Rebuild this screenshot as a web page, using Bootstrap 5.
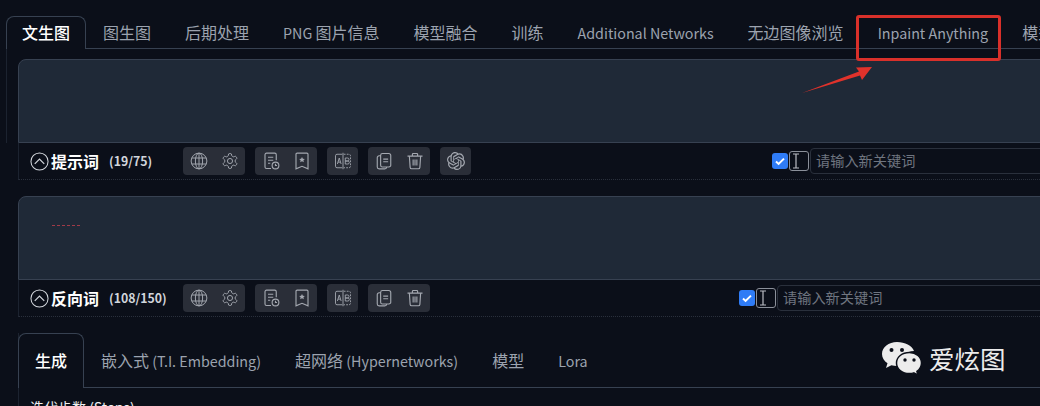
<!DOCTYPE html>
<html lang="zh-CN">

<head>
    <meta charset="UTF-8">
    <meta name="viewport" content="width=device-width, initial-scale=1.0">
    <title>文生图</title>
    <link href="https://cdn.jsdelivr.net/npm/bootstrap@5.3.0/dist/css/bootstrap.min.css" rel="stylesheet">
    <style>
        html, body {
            height: 406px;
            overflow: hidden;
        }

        body {
            background-color: #0b0f19;
            color: #e5e7eb;
            font-family: "Noto Sans CJK SC", "Noto Sans", sans-serif;
            font-size: 16px;
        }

        .page-wrap {
            padding: 16px 0 0 6px;
            width: 1200px;
        }

        .icon-defs {
            position: absolute;
            width: 0;
            height: 0;
        }

        .lat {
            font-size: 14.3px;
        }

        .sd-tabs {
            border-bottom: 1px solid #374151;
            flex-wrap: nowrap;
            white-space: nowrap;
            height: 33px;
        }

        .sd-tabs .nav-link {
            color: #9ca3af;
            background: transparent;
            border: 1px solid transparent;
            border-bottom: 0;
            border-radius: 8px 8px 0 0;
            font-size: 16px;
            line-height: 30px;
            height: 33px;
            padding: 0 16px;
            margin: 0;
        }

        .sd-tabs .nav-link.active {
            color: #fff;
            font-weight: 500;
            background: #0b0f19;
            border-color: #374151;
            padding: 0 15px;
        }

        .sd-tabs.sub-tabs {
            height: 55px;
            margin-left: -1px;
        }

        .sub-tabs .nav-link {
            line-height: 52px;
            height: 55px;
        }

        .sub-tabs .nav-link.active {
            padding: 0 16px;
        }

        .tab-body {
            border-left: 1px solid #1c2330;
            padding: 10px 0 0 11px;
        }

        .prompt-box {
            display: block;
            width: 100%;
            height: 84px;
            background-color: #1f2937;
            border: 1px solid #374151;
            border-radius: 8px 8px 0 0;
            resize: none;
            box-shadow: none;
        }

        .prompt-holder {
            position: relative;
            padding-left: 12px;
        }

        .prompt-marks {
            position: absolute;
            left: 46px;
            top: 29px;
            width: 28px;
            border-top: 1px dashed #a03a48;
        }

        .tool-row {
            height: 37px;
            margin-left: 12px;
            border-left: 1px solid #1c2330;
            border-bottom: 1px dotted #2a303c;
            margin-bottom: 16px;
            padding-left: 11px;
        }

        .fold-icon {
            width: 19px;
            height: 19px;
            margin-right: 2px;
            color: #d1d5db;
        }

        .prompt-label {
            color: #fff;
            font-weight: 700;
            font-size: 16px;
            width: 58px;
        }

        .token-count {
            color: #d1d5db;
            font-weight: 700;
            font-size: 12.3px;
            width: 74px;
        }

        .tool-group {
            display: flex;
            height: 28px;
            background-color: #2a2e38;
            border-radius: 4px;
            margin-right: 10px;
        }

        .tool-btn {
            display: flex;
            align-items: center;
            justify-content: center;
            width: 31px;
            height: 28px;
            padding: 0;
            border: 0;
            background: transparent;
            color: #a4a8b0;
        }

        .tool-btn svg {
            width: 18px;
            height: 18px;
        }

        .kw-first {
            margin-left: 291px;
        }

        .kw-second {
            margin-left: 299px;
        }

        .kw-check {
            appearance: none;
            flex: none;
            width: 16px;
            height: 16px;
            margin: 0 1px 0 0;
            border-radius: 3px;
            background-color: #2f7cf6;
            background-image: url("data:image/svg+xml,%3Csvg xmlns='http://www.w3.org/2000/svg' viewBox='0 0 16 16'%3E%3Cpath d='M4 8.5l2.6 2.4L12 5.6' fill='none' stroke='%23fff' stroke-width='2'/%3E%3C/svg%3E");
        }

        .cursor-box {
            display: flex;
            align-items: center;
            justify-content: center;
            flex: none;
            width: 20px;
            height: 20px;
            border: 1px solid #8b909a;
            border-radius: 3px;
            color: #b9bcc3;
            margin-right: 1px;
            padding-right: 7px;
        }

        .keyword-input {
            width: 300px;
            height: 26px;
            background: transparent;
            border: 1px solid #2a303c;
            border-radius: 4px;
            color: #e5e7eb;
            font-size: 14.2px;
            padding: 0 5px 2px;
        }

        .keyword-input::placeholder {
            color: #6f7580;
            opacity: 1;
        }

        .sub-wrap {
            margin: 16px 0 0 12px;
            border-left: 1px solid #1c2330;
        }

        .steps-label {
            padding: 9px 0 0 11px;
            font-size: 14px;
            line-height: 20px;
            color: #f0f1f3;
        }

        .red-frame {
            position: absolute;
            left: 856px;
            top: 15px;
            width: 145px;
            height: 46px;
            border: 3px solid #d9302a;
            border-radius: 3px;
        }

        .red-arrow {
            position: absolute;
            left: 800px;
            top: 62px;
            width: 76px;
            height: 34px;
        }

        .mark-logo {
            position: absolute;
            left: 881px;
            top: 340px;
            color: #ececec;
            font-size: 25.5px;
            line-height: 36px;
            gap: 7px;
        }

        .mark-logo svg {
            width: 41px;
            height: 36px;
        }
    </style>
</head>

<body>
    <!-- shared toolbar icons -->
    <svg class="icon-defs">
        <defs>
            <symbol id="i-globe" viewBox="0 0 24 24" fill="none" stroke="currentColor" stroke-width="1.3">
                <circle cx="12" cy="12" r="10.5" />
                <ellipse cx="12" cy="12" rx="4.8" ry="10.5" />
                <path d="M12 1.5v21M2.6 8h18.8M2.6 16h18.8" />
            </symbol>
            <symbol id="i-gear" viewBox="0 0 24 24" fill="none" stroke="currentColor" stroke-width="1.3">
                <path d="M12.22 2h-.44a2 2 0 0 0-2 2v.18a2 2 0 0 1-1 1.73l-.43.25a2 2 0 0 1-2 0l-.15-.08a2 2 0 0 0-2.73.73l-.22.38a2 2 0 0 0 .73 2.73l.15.1a2 2 0 0 1 1 1.72v.51a2 2 0 0 1-1 1.74l-.15.09a2 2 0 0 0-.73 2.73l.22.38a2 2 0 0 0 2.73.73l.15-.08a2 2 0 0 1 2 0l.43.25a2 2 0 0 1 1 1.73V20a2 2 0 0 0 2 2h.44a2 2 0 0 0 2-2v-.18a2 2 0 0 1 1-1.73l.43-.25a2 2 0 0 1 2 0l.15.08a2 2 0 0 0 2.73-.73l.22-.39a2 2 0 0 0-.73-2.73l-.15-.08a2 2 0 0 1-1-1.74v-.5a2 2 0 0 1 1-1.74l.15-.09a2 2 0 0 0 .73-2.73l-.22-.38a2 2 0 0 0-2.73-.73l-.15.08a2 2 0 0 1-2 0l-.43-.25a2 2 0 0 1-1-1.73V4a2 2 0 0 0-2-2z" />
                <circle cx="12" cy="12" r="3.4" />
            </symbol>
            <symbol id="i-history" viewBox="0 0 24 24" fill="none" stroke="currentColor" stroke-width="1.5">
                <path d="M12 22H6a2 2 0 0 1-2-2V3.5a2 2 0 0 1 2-2h11a2 2 0 0 1 2 2V11" />
                <path d="M8 7h7M8 11h7M8 15h3" />
                <circle cx="18" cy="18" r="4.5" />
                <path d="M18 15.8V18h2" />
            </symbol>
            <symbol id="i-bookmark" viewBox="0 0 24 24" fill="none" stroke="currentColor" stroke-width="1.5">
                <path d="M4 22.500V3a1.500 1.500 0 0 1 1.500-1.500h13A1.500 1.500 0 0 1 20 3v19.500l-8-3.500z" />
                <path d="M12 6.500l1.200 2.400 2.600.3-1.900 1.800.5 2.600-2.400-1.300-2.400 1.300.5-2.600-1.900-1.800 2.600-.3z" fill="currentColor" stroke="none" />
            </symbol>
            <symbol id="i-ab" viewBox="0 0 24 24" fill="none" stroke="currentColor" stroke-width="1.2">
                <path d="M11 3H4a2 2 0 0 0-2 2v14a2 2 0 0 0 2 2h7" />
                <path d="M13 3h7a2 2 0 0 1 2 2v14a2 2 0 0 1-2 2h-7" stroke-dasharray="2.400 1.600" />
                <path d="M12 1v22" />
                <path d="M4.500 16l2.500-8 2.500 8M5.400 13.500h3.200" />
                <path d="M15 8h3a2 2 0 0 1 0 4h-3zM15 12h3.400a2 2 0 0 1 0 4H15z" />
            </symbol>
            <symbol id="i-copy" viewBox="0 0 24 24" fill="none" stroke="currentColor" stroke-width="1.5">
                <path d="M10 2h8.500A2.500 2.500 0 0 1 21 4.500v13a2.500 2.500 0 0 1-2.500 2.500H10a2.500 2.500 0 0 1-2.500-2.500v-13A2.500 2.500 0 0 1 10 2z" />
                <path d="M7.500 5H5.500A2.500 2.500 0 0 0 3 7.500V20a2.500 2.500 0 0 0 2.500 2.500H13a2.500 2.500 0 0 0 2.500-2.500" />
                <path d="M11 9.500h6.500M11 13h6.500" />
            </symbol>
            <symbol id="i-trash" viewBox="0 0 24 24" fill="none" stroke="currentColor" stroke-width="1.5">
                <path d="M2 5.500h20M8.500 5.500V3.200A1.200 1.200 0 0 1 9.700 2h4.600a1.200 1.200 0 0 1 1.200 1.200v2.300" />
                <path d="M4.500 5.500l1 15a2 2 0 0 0 2 1.800h9a2 2 0 0 0 2-1.800l1-15" />
                <path d="M9.500 10v8M12 10v8M14.500 10v8" />
            </symbol>
            <symbol id="i-knot" viewBox="0 0 24 24" fill="currentColor">
                <path d="M22.2819 9.8211a5.9847 5.9847 0 0 0-.5157-4.9108 6.0462 6.0462 0 0 0-6.5098-2.9A6.0651 6.0651 0 0 0 4.9807 4.1818a5.9847 5.9847 0 0 0-3.9977 2.9 6.0462 6.0462 0 0 0 .7427 7.0966 5.98 5.98 0 0 0 .511 4.9107 6.051 6.051 0 0 0 6.5146 2.9001A5.9847 5.9847 0 0 0 13.2599 24a6.0557 6.0557 0 0 0 5.7718-4.2058 5.9894 5.9894 0 0 0 3.9977-2.9001 6.0557 6.0557 0 0 0-.7475-7.0729zm-9.022 12.6081a4.4755 4.4755 0 0 1-2.8764-1.0408l.1419-.0804 4.7783-2.7582a.7948.7948 0 0 0 .3927-.6813v-6.7369l2.02 1.1686a.071.071 0 0 1 .038.052v5.5826a4.504 4.504 0 0 1-4.4945 4.4944zm-9.6607-4.1254a4.4708 4.4708 0 0 1-.5346-3.0137l.142.0852 4.783 2.7582a.7712.7712 0 0 0 .7806 0l5.8428-3.3685v2.3324a.0804.0804 0 0 1-.0332.0615L9.74 19.9502a4.4992 4.4992 0 0 1-6.1408-1.6464zM2.3408 7.8956a4.485 4.485 0 0 1 2.3655-1.9728V11.6a.7664.7664 0 0 0 .3879.6765l5.8144 3.3543-2.0201 1.1685a.0757.0757 0 0 1-.071 0l-4.8303-2.7865A4.504 4.504 0 0 1 2.3408 7.872zm16.5963 3.8558L13.1038 8.364 15.1192 7.2a.0757.0757 0 0 1 .071 0l4.8303 2.7913a4.4944 4.4944 0 0 1-.6765 8.1042v-5.6772a.79.79 0 0 0-.407-.667zm2.0107-3.0231l-.142-.0852-4.7735-2.7818a.7759.7759 0 0 0-.7854 0L9.409 9.2297V6.8974a.0662.0662 0 0 1 .0284-.0615l4.8303-2.7866a4.4992 4.4992 0 0 1 6.6802 4.66zM8.3065 12.863l-2.02-1.1638a.0804.0804 0 0 1-.038-.0567V6.0742a4.4992 4.4992 0 0 1 7.3757-3.4537l-.142.0805L8.704 5.459a.7948.7948 0 0 0-.3927.6813zm1.0976-2.3654l2.602-1.4998 2.6069 1.4998v2.9994l-2.5974 1.4997-2.6067-1.4997Z" />
            </symbol>
            <symbol id="i-fold" viewBox="0 0 20 20" fill="none" stroke="currentColor" stroke-width="1.100">
                <circle cx="10" cy="10" r="9" />
                <path d="M5 12.500l5-5 5 5" stroke-width="1.300" />
            </symbol>
            <symbol id="i-cursor" viewBox="0 0 8 16" fill="none" stroke="currentColor" stroke-width="1.200">
                <path d="M1 1h6M1 15h6M4 1v14" />
            </symbol>
        </defs>
    </svg>

    <div class="page-wrap">
        <ul class="nav nav-tabs sd-tabs">
            <li class="nav-item"><a class="nav-link active" href="#">文生图</a></li>
            <li class="nav-item"><a class="nav-link" href="#">图生图</a></li>
            <li class="nav-item"><a class="nav-link" href="#">后期处理</a></li>
            <li class="nav-item"><a class="nav-link" href="#"><span class="lat">PNG </span>图片信息</a></li>
            <li class="nav-item"><a class="nav-link" href="#">模型融合</a></li>
            <li class="nav-item"><a class="nav-link" href="#">训练</a></li>
            <li class="nav-item"><a class="nav-link" href="#"><span class="lat">Additional Networks</span></a></li>
            <li class="nav-item"><a class="nav-link" href="#">无边图像浏览</a></li>
            <li class="nav-item"><a class="nav-link" href="#"><span class="lat">Inpaint Anything</span></a></li>
            <li class="nav-item"><a class="nav-link" href="#">模型转换</a></li>
        </ul>

        <div class="tab-body">
            <textarea class="prompt-box"></textarea>
        </div>
        <div class="tool-row d-flex align-items-center" id="row-prompt"></div>

        <div class="prompt-holder">
            <textarea class="prompt-box"></textarea>
            <div class="prompt-marks"></div>
        </div>
        <div class="tool-row d-flex align-items-center" id="row-negative"></div>

        <div class="sub-wrap">
            <ul class="nav nav-tabs sd-tabs sub-tabs">
                <li class="nav-item"><a class="nav-link active" href="#">生成</a></li>
                <li class="nav-item"><a class="nav-link" href="#">嵌入式<span class="lat"> (T.I. Embedding)</span></a></li>
                <li class="nav-item"><a class="nav-link" href="#">超网络<span class="lat"> (Hypernetworks)</span></a></li>
                <li class="nav-item"><a class="nav-link" href="#">模型</a></li>
                <li class="nav-item"><a class="nav-link" href="#"><span class="lat">Lora</span></a></li>
            </ul>
            <div class="steps-label">迭代步数 (Steps)</div>
        </div>
    </div>

    <div class="red-frame"></div>
    <svg class="red-arrow" viewBox="0 0 76 34">
        <path d="M2 31L59 9.500 56 5.500 72 5 62 18 60 13.500z" fill="#e0322b" />
    </svg>

    <div class="mark-logo d-flex align-items-center">
        <svg viewBox="0 0 41 36">
            <path d="M16 2C7.700 2 1 7.300 1 14c0 3.800 2.200 7 5.500 9.300L5 28l5.400-2.700c1.800.500 3.600.700 5.600.700 1 0 2-.1 3-.2C18 18 25 11 33 11c-2-5.400-9-9-17-9z" fill="currentColor" />
            <circle cx="10.500" cy="10" r="2" fill="#0b0f19" />
            <circle cx="21" cy="10" r="2" fill="#0b0f19" />
            <path d="M28.500 12.500C21 12.500 15.500 17 15.500 23s5.500 10.500 13 10.500c1.500 0 3-.2 4.300-.6l4.200 2.300-1.100-3.900c3-2 4.600-4.800 4.600-8.300 0-6-5.500-10.500-12-10.500z" fill="currentColor" stroke="#0b0f19" stroke-width="1.500" />
            <circle cx="24" cy="20" r="1.700" fill="#0b0f19" />
            <circle cx="33" cy="20" r="1.700" fill="#0b0f19" />
        </svg>
        <span>爱炫图</span>
    </div>

    <script>
        // toolbars are the same in both rows, only label and last group differ
        const groups = [['i-globe', 'i-gear'], ['i-history', 'i-bookmark'], ['i-ab'], ['i-copy', 'i-trash']];

        const buildRow = (id, label, count, extraGroup, kwClass) => {
            const allGroups = extraGroup ? [...groups, ['i-knot']] : groups;
            const toolHtml = allGroups.map(g => `
                <div class="tool-group">${g.map(icon => `
                    <button class="tool-btn" type="button"><svg><use href="#${icon}"></use></svg></button>`).join('')}
                </div>`).join('');

            document.getElementById(id).innerHTML = `
                <svg class="fold-icon flex-shrink-0"><use href="#i-fold"></use></svg>
                <span class="prompt-label flex-shrink-0">${label}</span>
                <span class="token-count flex-shrink-0">${count}</span>
                ${toolHtml}
                <div class="d-flex align-items-center ${kwClass}">
                    <input class="kw-check" type="checkbox" checked>
                    <span class="cursor-box"><svg width="8" height="16"><use href="#i-cursor"></use></svg></span>
                    <input class="keyword-input" type="text" placeholder="请输入新关键词">
                </div>`;
        };

        buildRow('row-prompt', '提示词', '(19/75)', true, 'kw-first');
        buildRow('row-negative', '反向词', '(108/150)', false, 'kw-second');
    </script>
</body>

</html>
